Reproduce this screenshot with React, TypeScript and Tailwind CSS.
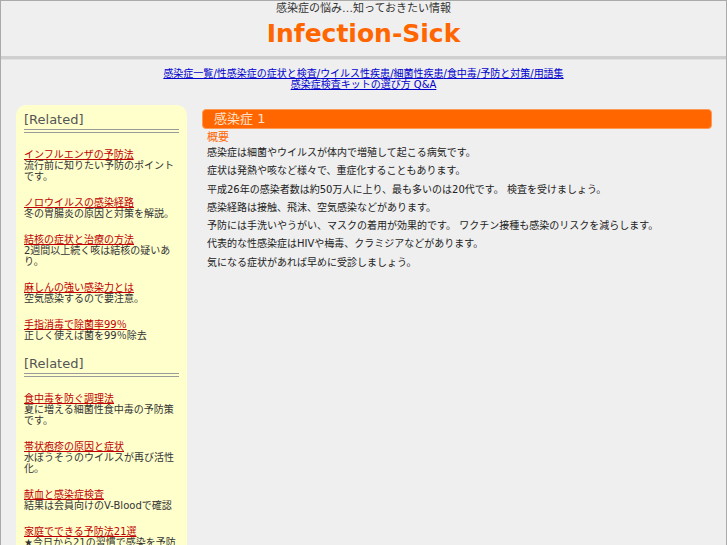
const navLinks = [
  "感染症一覧",
  "性感染症の症状と検査",
  "ウイルス性疾患",
  "細菌性疾患",
  "食中毒",
  "予防と対策",
  "用語集",
];

const related1 = [
  { title: "インフルエンザの予防法", text: "流行前に知りたい予防のポイントです。" },
  { title: "ノロウイルスの感染経路", text: "冬の胃腸炎の原因と対策を解説。" },
  { title: "結核の症状と治療の方法", text: "2週間以上続く咳は結核の疑いあり。" },
  { title: "麻しんの強い感染力とは", text: "空気感染するので要注意。" },
  { title: "手指消毒で除菌率99％", text: "正しく使えば菌を99％除去" },
];

const related2 = [
  { title: "食中毒を防ぐ調理法", text: "夏に増える細菌性食中毒の予防策です。" },
  { title: "帯状疱疹の原因と症状", text: "水ぼうそうのウイルスが再び活性化。" },
  { title: "献血と感染症検査", text: "結果は会員向けのV-Bloodで確認" },
  { title: "家庭でできる予防法21選", text: "★今日から21の習慣で感染を予防しよう" },
];

const paragraphs = [
  "感染症は細菌やウイルスが体内で増殖して起こる病気です。",
  "症状は発熱や咳など様々で、重症化することもあります。",
  "平成26年の感染者数は約50万人に上り、最も多いのは20代です。 検査を受けましょう。",
  "感染経路は接触、飛沫、空気感染などがあります。",
  "予防には手洗いやうがい、マスクの着用が効果的です。 ワクチン接種も感染のリスクを減らします。",
  "代表的な性感染症はHIVや梅毒、クラミジアなどがあります。",
  "気になる症状があれば早めに受診しましょう。",
];

type Item = { title: string; text: string };

const RelatedBlock = ({ items }: { items: Item[] }) => (
  <div>
    <h3 className="border-b-4 border-double border-[#9a9a9a] pb-[1px] text-[13px] leading-[16px] text-[#555]">
      [Related]
    </h3>
    <ul className="mt-[16px]">
      {items.map((item) => (
        <li key={item.title} className="mb-[15px] text-[10px] leading-[11px]">
          <a href="#" className="block text-[#c00000] underline">
            {item.title}
          </a>
          <p className="text-[#333]">{item.text}</p>
        </li>
      ))}
    </ul>
  </div>
);

export default function App() {
  return (
    <div className="h-[545px] w-[727px] overflow-hidden border-x border-t border-[#aaa] bg-[#efefef] font-[family-name:'DejaVu_Sans','Noto_Sans_CJK_JP',sans-serif]">
      {/* Header */}
      <header className="border-b-[3px] border-[#cfcfcf] pt-[2px] pb-[8px] text-center shadow-[0_1px_0_#e2e2e2]">
        <p className="text-[11px] leading-[12px] text-[#333]">感染症の悩み…知っておきたい情報</p>
        <h1 className="mt-[4px] text-[25px] font-bold leading-[29px] text-[#ff6600]">Infection-Sick</h1>
      </header>

      {/* Navigation */}
      <nav className="pt-[9px] text-center text-[10px] leading-[11px] text-[#0000cc]">
        {navLinks.map((link, i) => (
          <span key={link}>
            {i > 0 && <span className="underline">/</span>}
            <a href="#" className="underline">
              {link}
            </a>
          </span>
        ))}
        <br />
        <a href="#" className="underline">
          感染症検査キットの選び方 Q&A
        </a>
      </nav>

      {/* Body */}
      <div className="mt-[15px] flex gap-[15px] pl-[15px]">
        <aside className="w-[171px] shrink-0 rounded-t-[10px] bg-[#ffffcc] px-[8px] pt-[7px] pb-4">
          <RelatedBlock items={related1} />
          <RelatedBlock items={related2} />
        </aside>

        <main className="mt-[4px] w-[510px]">
          <div className="rounded-[4px] border border-[#ff9a55] bg-[#ff6600] pl-[11px] text-[13px] leading-[18px] text-[#ffe3cc]">
            感染症 1
          </div>
          <div className="px-[5px]">
            <h2 className="mt-[3px] text-[11px] leading-[12px] text-[#ff6600]">概要</h2>
            {paragraphs.map((p) => (
              <p key={p} className="whitespace-pre text-[10px] leading-[18.3px] text-[#222]">
                {p}
              </p>
            ))}
          </div>
        </main>
      </div>
    </div>
  );
}
